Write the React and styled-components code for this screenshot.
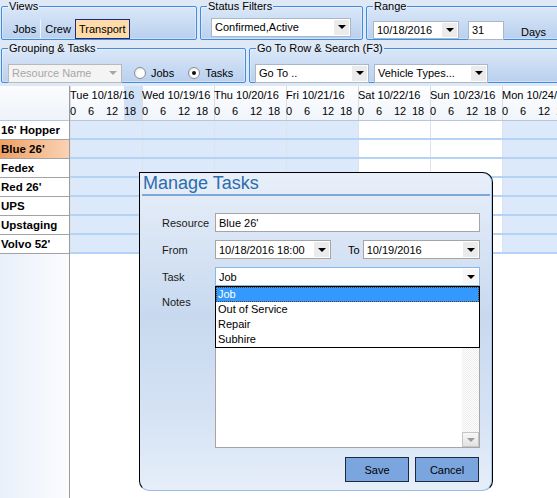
import styled, { createGlobalStyle } from 'styled-components'

const GlobalStyle = createGlobalStyle`
  html, body { margin: 0; padding: 0; }
  body {
    font-family: 'Liberation Sans', Arial, sans-serif;
    font-size: 11px;
    color: #000;
    background: #fff;
    overflow: hidden;
  }
  * { box-sizing: border-box; }
`

const DAYS = [
  { label: 'Tue 10/18/16', weekend: false, highlight: 3 },
  { label: 'Wed 10/19/16', weekend: false },
  { label: 'Thu 10/20/16', weekend: false },
  { label: 'Fri 10/21/16', weekend: false },
  { label: 'Sat 10/22/16', weekend: true },
  { label: 'Sun 10/23/16', weekend: true },
  { label: 'Mon 10/24/16', weekend: false },
]
const HOURS = ['0', '6', '12', '18']
const RESOURCES = ["16' Hopper", "Blue 26'", 'Fedex', "Red 26'", 'UPS', 'Upstaging', "Volvo 52'"]
const TASKS = ['Job', 'Out of Service', 'Repair', 'Subhire']

const Page = styled.div`
  position: relative;
  width: 557px;
  height: 498px;
  overflow: hidden;
  display: flex;
  flex-direction: column;
`

/* ---------- toolbar ---------- */

const Toolbar = styled.div`
  background: #dfe9f6;
  padding: 0 0 3px 1px;
  display: flex;
  flex-direction: column;
  gap: 2px;
  flex-shrink: 0;
`

const ToolRow = styled.div`
  display: flex;
  gap: 3px;
  height: ${({ $h }) => $h}px;
`

const Group = styled.fieldset`
  margin: 0;
  min-width: 0;
  flex-shrink: 0;
  width: ${({ $w }) => $w}px;
  padding: ${({ $pad }) => $pad || '0 6px'};
  border: 1px solid #3f8de3;
  border-radius: 2px;
  background: linear-gradient(#dae7f8, #b9d0ee);
  box-shadow: inset 0 0 0 1px rgba(255, 255, 255, 0.35);
  display: flex;
  align-items: ${({ $align }) => $align || 'center'};
  gap: ${({ $gap }) => $gap || 0}px;
`

const Legend = styled.legend`
  padding: 0 1px;
  margin-left: ${({ $shift }) => $shift || 0}px;
  font-size: 11px;
  line-height: 12px;
  color: #000;
`

const ViewTab = styled.div`
  height: 20px;
  padding: 0 ${({ $px }) => $px}px;
  display: flex;
  align-items: center;
  border: 1px solid transparent;
  ${({ $divider }) => $divider && 'border-right-color: #eef4fd;'}
  ${({ $active }) =>
    $active &&
    `
      background: #ffdba9;
      border-color: #1d2b7a;
    `}
`

const Combo = styled.div`
  display: flex;
  align-items: stretch;
  width: ${({ $w }) => ($w ? `${$w}px` : 'auto')};
  flex: ${({ $w }) => ($w ? '0 0 auto' : '1')};
  height: ${({ $h }) => $h || 19}px;
  background: ${({ $disabled }) => ($disabled ? '#f4f4f4' : '#fff')};
  border: 1px solid ${({ $border }) => $border || '#a9b8c9'};
  color: ${({ $disabled }) => ($disabled ? '#a7a7a7' : '#000')};
  margin-left: ${({ $ml }) => $ml || 0}px;
`

const ComboText = styled.div`
  flex: 1;
  padding-left: 3px;
  display: flex;
  align-items: center;
  white-space: nowrap;
  overflow: hidden;
`

const ArrowBtn = styled.div`
  width: 15px;
  margin: 1px;
  background: ${({ $bg }) => $bg || '#ebebeb'};
  display: flex;
  align-items: center;
  justify-content: center;
`

const Triangle = styled.div`
  width: 0;
  height: 0;
  border-left: 4px solid transparent;
  border-right: 4px solid transparent;
  border-top: 4px solid ${({ $color }) => $color || '#000'};
`

const TextBox = styled.div`
  width: ${({ $w }) => ($w ? `${$w}px` : 'auto')};
  flex: ${({ $w }) => ($w ? '0 0 auto' : '1')};
  height: ${({ $h }) => $h || 19}px;
  background: #fff;
  border: 1px solid ${({ $border }) => $border || '#a5a5a5'};
  padding-left: 3px;
  display: flex;
  align-items: center;
  margin-left: ${({ $ml }) => $ml || 0}px;
`

const Caption = styled.span`
  margin-left: ${({ $ml }) => $ml || 0}px;
  padding-top: ${({ $pt }) => $pt || 0}px;
`

const RadioWrap = styled.label`
  display: flex;
  align-items: center;
  gap: 5px;
  margin-left: ${({ $ml }) => $ml || 0}px;
`

const RadioDot = styled.span`
  width: 12px;
  height: 12px;
  border-radius: 50%;
  border: 1px solid #8e8f8f;
  background: radial-gradient(circle at 60% 60%, #fff 40%, #dcdcdc 100%);
  display: flex;
  align-items: center;
  justify-content: center;
  &::after {
    content: '';
    width: 4px;
    height: 4px;
    border-radius: 50%;
    background: ${({ $checked }) => ($checked ? '#111' : 'transparent')};
  }
`

const DropCombo = ({ children, w, h, disabled, border, ml, arrowBg, arrowColor }) => (
  <Combo $w={w} $h={h} $disabled={disabled} $border={border} $ml={ml}>
    <ComboText>{children}</ComboText>
    <ArrowBtn $bg={arrowBg}>
      <Triangle $color={arrowColor} />
    </ArrowBtn>
  </Combo>
)

const Radio = ({ label, checked, ml }) => (
  <RadioWrap $ml={ml}>
    <RadioDot $checked={checked} />
    {label}
  </RadioWrap>
)

/* ---------- schedule ---------- */

const Schedule = styled.div`
  flex: 1;
  display: flex;
  min-height: 0;
`

const ResourceCol = styled.div`
  width: 70px;
  flex-shrink: 0;
  border-right: 1px solid #9c9c9c;
  background: linear-gradient(90deg, #e9f0fa, #fbfcfe);
`

const Corner = styled.div`
  height: 35px;
  background: linear-gradient(#fbfcfe, #eef3fa);
  border-bottom: 1px solid #b9c6d6;
`

const ResourceCell = styled.div`
  height: 19px;
  border-bottom: 1px solid #a3a3a3;
  padding-left: 1px;
  font-weight: bold;
  font-size: 11.5px;
  line-height: 18px;
  white-space: nowrap;
  background: ${({ $selected }) =>
    $selected ? 'linear-gradient(90deg, #ee9f64, #fad3b4)' : '#fff'};
`

const Timeline = styled.div`
  flex: 1;
  overflow: hidden;
  background: #fff;
`

const TimeHeader = styled.div`
  display: flex;
  height: 35px;
  border-bottom: 1px solid #b9c6d6;
  background: linear-gradient(#fdfeff, #f1f5fb);
`

const DayHead = styled.div`
  flex: 0 0 72px;
  display: grid;
  grid-template-columns: repeat(4, 18px);
  grid-template-rows: 17px 17px;
  box-shadow: inset 1px 0 #d3deea;
`

const SlotHighlight = styled.div`
  grid-row: 1 / -1;
  grid-column: ${({ $col }) => $col + 1};
  background: #d0e1f6;
`

const DayLabel = styled.div`
  grid-row: 1;
  grid-column: 1 / -1;
  padding-top: 3px;
  white-space: nowrap;
  z-index: 1;
`

const HourLabel = styled.div`
  grid-row: 2;
  grid-column: ${({ $col }) => $col + 1};
  padding-top: 2px;
  z-index: 1;
`

const TimeRow = styled.div`
  display: flex;
  height: 19px;
`

const DayCell = styled.div`
  flex: 0 0 72px;
  background: ${({ $weekend }) => ($weekend ? '#fff' : '#dce9fa')};
  border-bottom: 2px solid #b5d3f4;
  box-shadow: inset 1px 0 #dde3ea;
`

/* ---------- dialog ---------- */

const Dialog = styled.div`
  position: absolute;
  left: 139px;
  top: 172px;
  width: 354px;
  height: 319px;
  border: 1px solid #000;
  border-bottom-color: #9dbbe0;
  border-radius: 0 10px 10px 10px;
  background: linear-gradient(
    #e8eff9 0%,
    #d6e3f4 25%,
    #c8d9ef 45%,
    #d4e2f4 75%,
    #e6eef9 100%
  );
  box-shadow: inset -1px 0 #a8c6ea;
  z-index: 5;
`

const DialogTitle = styled.div`
  margin: 0 2px;
  height: 23px;
  font-size: 18px;
  line-height: 21px;
  color: #2c6cad;
  border-bottom: 2px solid #7ba8d8;
  padding-left: 1px;
`

const Form = styled.div`
  display: grid;
  grid-template-columns: 53px 1fr;
  row-gap: 8px;
  padding: 17px 12px 0 22px;
`

const Label = styled.div`
  align-self: ${({ $top }) => ($top ? 'start' : 'center')};
  padding-top: ${({ $top }) => ($top ? 2 : 0)}px;
  color: #1a1a1a;
`

const FieldRow = styled.div`
  display: flex;
  align-items: center;
  position: relative;
`

const TaskList = styled.div`
  position: absolute;
  top: 100%;
  left: 0;
  right: 0;
  background: #fff;
  border: 1px solid #000;
  z-index: 3;
`

const TaskItem = styled.div`
  height: 15px;
  line-height: 14px;
  padding-left: 2px;
  ${({ $selected }) =>
    $selected &&
    `
      background: #3399ff;
      color: #fff;
      outline: 1px dotted #5a3a10;
      outline-offset: -1px;
    `}
`

const Notes = styled.div`
  height: 154px;
  background: #fff;
  border: 1px solid #a5a5a5;
  display: flex;
  justify-content: flex-end;
`

const ScrollTrack = styled.div`
  width: 17px;
  display: flex;
  flex-direction: column;
`

const ScrollTexture = styled.div`
  flex: 1;
  background: repeating-conic-gradient(#ededed 0 25%, #fff 0 50%) 0 0 / 2px 2px;
`

const ScrollArrow = styled.div`
  height: 15px;
  border: 1px solid #c5c5c5;
  background: linear-gradient(#f7f7f7, #e2e2e2);
  display: flex;
  align-items: center;
  justify-content: center;
`

const ButtonBar = styled.div`
  display: flex;
  justify-content: flex-end;
  gap: 6px;
  padding: 9px 13px 0 0;
`

const DlgButton = styled.button`
  width: ${({ $w }) => $w}px;
  height: 25px;
  background: #7ba5de;
  border: 1px solid #1e2a3c;
  font-family: inherit;
  font-size: 11px;
  color: #000;
  padding: 0;
`

const App = () => {
  return (
    <Page>
      <GlobalStyle />
      <Toolbar>
        <ToolRow $h={40}>
          <Group $w={196} $align="flex-end">
            <Legend>Views</Legend>
            <ViewTab $px={4} $divider>Jobs</ViewTab>
            <ViewTab $px={3}>Crew</ViewTab>
            <ViewTab $px={3} $active>
              Transport
            </ViewTab>
          </Group>
          <Group $w={163} $pad="3px 6px 0">
            <Legend>Status Filters</Legend>
            <DropCombo w={140} ml={4}>
              Confirmed,Active
            </DropCombo>
          </Group>
          <Group $w={200} $pad="9px 6px 0">
            <Legend>Range</Legend>
            <DropCombo w={86} h={18}>
              10/18/2016
            </DropCombo>
            <TextBox $w={36} $h={19} $ml={9} $border="#a9b8c9">
              31
            </TextBox>
            <Caption $ml={17} $pt={3}>
              Days
            </Caption>
          </Group>
        </ToolRow>
        <ToolRow $h={41}>
          <Group $w={245} $pad="10px 6px 0">
            <Legend>Grouping &amp; Tasks</Legend>
            <DropCombo w={114} disabled border="#b9b9b9" arrowBg="#f4f4f4" arrowColor="#a7a7a7">
              Resource Name
            </DropCombo>
            <Radio label="Jobs" ml={12} />
            <Radio label="Tasks" checked ml={14} />
          </Group>
          <Group $w={315} $pad="10px 6px 0 5px">
            <Legend $shift={1}>Go To Row &amp; Search (F3)</Legend>
            <DropCombo w={114}>Go To ..</DropCombo>
            <DropCombo w={114} ml={5}>
              Vehicle Types...
            </DropCombo>
          </Group>
        </ToolRow>
      </Toolbar>

      <Schedule>
        <ResourceCol>
          <Corner />
          {RESOURCES.map((name, i) => (
            <ResourceCell key={name} $selected={i === 1}>
              {name}
            </ResourceCell>
          ))}
        </ResourceCol>
        <Timeline>
          <TimeHeader>
            {DAYS.map((day) => (
              <DayHead key={day.label}>
                {day.highlight !== undefined && <SlotHighlight $col={day.highlight} />}
                <DayLabel>{day.label}</DayLabel>
                {HOURS.map((h, i) => (
                  <HourLabel key={h} $col={i}>
                    {h}
                  </HourLabel>
                ))}
              </DayHead>
            ))}
          </TimeHeader>
          {RESOURCES.map((name) => (
            <TimeRow key={name}>
              {DAYS.map((day) => (
                <DayCell key={day.label} $weekend={day.weekend} />
              ))}
            </TimeRow>
          ))}
        </Timeline>
      </Schedule>

      <Dialog>
        <DialogTitle>Manage Tasks</DialogTitle>
        <Form>
          <Label>Resource</Label>
          <TextBox>Blue 26'</TextBox>

          <Label>From</Label>
          <FieldRow>
            <DropCombo w={116} border="#a5a5a5">
              10/18/2016 18:00
            </DropCombo>
            <Caption $ml={17}>To</Caption>
            <DropCombo border="#a5a5a5" ml={3}>
              10/19/2016
            </DropCombo>
          </FieldRow>

          <Label>Task</Label>
          <FieldRow>
            <DropCombo border="#84b9ef" arrowBg="#f7f7f7">
              Job
            </DropCombo>
            <TaskList>
              {TASKS.map((t, i) => (
                <TaskItem key={t} $selected={i === 0}>
                  {t}
                </TaskItem>
              ))}
            </TaskList>
          </FieldRow>

          <Label $top>Notes</Label>
          <Notes>
            <ScrollTrack>
              <ScrollTexture />
              <ScrollArrow>
                <Triangle $color="#9a9a9a" />
              </ScrollArrow>
            </ScrollTrack>
          </Notes>
        </Form>
        <ButtonBar>
          <DlgButton $w={64}>Save</DlgButton>
          <DlgButton $w={64}>Cancel</DlgButton>
        </ButtonBar>
      </Dialog>
    </Page>
  )
}

export default App
